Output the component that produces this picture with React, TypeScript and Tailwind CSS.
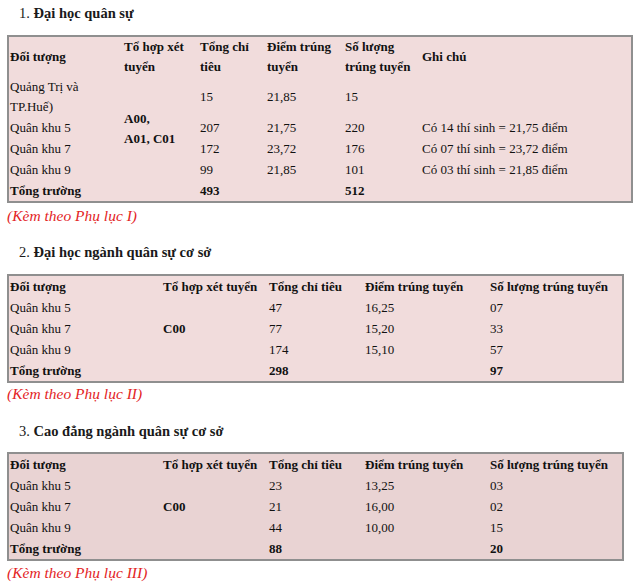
const td = "px-px py-0 h-[21px] leading-[20px] align-middle text-left";

function Title({ n, text }: { n: string; text: string }) {
  return (
    <div className="pl-[12px] text-[14.5px] leading-[20px] text-[#1a1a1a]">
      {n}. <span className="font-bold">{text}</span>
    </div>
  );
}

function Caption({ text }: { text: string }) {
  return <div className="text-[15.5px] leading-[20px] italic text-[#e3241f]">{text}</div>;
}

function SmallTable({
  rows,
  tong,
  soLuong,
  bg,
}: {
  rows: [string, string, string, string][];
  tong: string;
  soLuong: string;
  bg: string;
}) {
  return (
    <table
      className={`w-[617px] table-fixed border-separate border-spacing-0 border-2 border-[#8f8f8f] text-[13px] text-[#111] ${bg}`}
    >
      <colgroup>
        <col className="w-[153px]" />
        <col className="w-[106px]" />
        <col className="w-[96px]" />
        <col className="w-[125px]" />
        <col />
      </colgroup>
      <tbody>
        <tr className="font-bold">
          <td className={td}>Đối tượng</td>
          <td className={td}>Tổ hợp xét tuyển</td>
          <td className={td}>Tổng chỉ tiêu</td>
          <td className={td}>Điểm trúng tuyển</td>
          <td className={td}>Số lượng trúng tuyển</td>
        </tr>
        {rows.map((r, i) => (
          <tr key={r[0]}>
            <td className={td}>{r[0]}</td>
            {i === 0 && (
              <td rowSpan={3} className={`${td} font-bold`}>
                C00
              </td>
            )}
            <td className={td}>{r[1]}</td>
            <td className={td}>{r[2]}</td>
            <td className={td}>{r[3]}</td>
          </tr>
        ))}
        <tr className="font-bold">
          <td className={td}>Tổng trường</td>
          <td className={td}></td>
          <td className={td}>{tong}</td>
          <td className={td}></td>
          <td className={td}>{soLuong}</td>
        </tr>
      </tbody>
    </table>
  );
}

export default function App() {
  return (
    <div className="font-['Liberation_Serif'] w-[640px] h-[586px] bg-white px-[7px] pt-[3px] overflow-hidden">
      <Title n="1" text="Đại học quân sự" />

      <table className="mt-[12px] w-[626px] table-fixed border-separate border-spacing-0 border-2 border-[#8f8f8f] bg-[#f1dcdc] text-[13px] text-[#111]">
        <colgroup>
          <col className="w-[114px]" />
          <col className="w-[76px]" />
          <col className="w-[67px]" />
          <col className="w-[78px]" />
          <col className="w-[77px]" />
          <col />
        </colgroup>
        <tbody>
          <tr className="font-bold">
            <td className={td}>Đối tượng</td>
            <td className={td}>
              Tổ hợp xét
              <br />
              tuyển
            </td>
            <td className={td}>
              Tổng chỉ
              <br />
              tiêu
            </td>
            <td className={td}>
              Điểm trúng
              <br />
              tuyển
            </td>
            <td className={td}>
              Số lượng
              <br />
              trúng tuyển
            </td>
            <td className={td}>Ghi chú</td>
          </tr>
          <tr>
            <td className={td}>
              Quảng Trị và
              <br />
              TP.Huế)
            </td>
            <td rowSpan={4} className={`${td} font-bold`}>
              A00,
              <br />
              A01, C01
            </td>
            <td className={td}>15</td>
            <td className={td}>21,85</td>
            <td className={td}>15</td>
            <td className={td}></td>
          </tr>
          <tr>
            <td className={td}>Quân khu 5</td>
            <td className={td}>207</td>
            <td className={td}>21,75</td>
            <td className={td}>220</td>
            <td className={td}>Có 14 thí sinh = 21,75 điểm</td>
          </tr>
          <tr>
            <td className={td}>Quân khu 7</td>
            <td className={td}>172</td>
            <td className={td}>23,72</td>
            <td className={td}>176</td>
            <td className={td}>Có 07 thí sinh = 23,72 điểm</td>
          </tr>
          <tr>
            <td className={td}>Quân khu 9</td>
            <td className={td}>99</td>
            <td className={td}>21,85</td>
            <td className={td}>101</td>
            <td className={td}>Có 03 thí sinh = 21,85 điểm</td>
          </tr>
          <tr className="font-bold">
            <td className={td}>Tổng trường</td>
            <td className={td}></td>
            <td className={td}>493</td>
            <td className={td}></td>
            <td className={td}>512</td>
            <td className={td}></td>
          </tr>
        </tbody>
      </table>
      <div className="mt-[3px]">
        <Caption text="(Kèm theo Phụ lục I)" />
      </div>

      <div className="mt-[16px]">
        <Title n="2" text="Đại học ngành quân sự cơ sở" />
      </div>
      <div className="mt-[12px]">
        <SmallTable
          bg="bg-[#f1dcdc]"
          rows={[
            ["Quân khu 5", "47", "16,25", "07"],
            ["Quân khu 7", "77", "15,20", "33"],
            ["Quân khu 9", "174", "15,10", "57"],
          ]}
          tong="298"
          soLuong="97"
        />
      </div>
      <div className="mt-px">
        <Caption text="(Kèm theo Phụ lục II)" />
      </div>

      <div className="mt-[17px]">
        <Title n="3" text="Cao đẳng ngành quân sự cơ sở" />
      </div>
      <div className="mt-[11px]">
        <SmallTable
          bg="bg-[#e9d3d3]"
          rows={[
            ["Quân khu 5", "23", "13,25", "03"],
            ["Quân khu 7", "21", "16,00", "02"],
            ["Quân khu 9", "44", "10,00", "15"],
          ]}
          tong="88"
          soLuong="20"
        />
      </div>
      <div className="mt-[2px]">
        <Caption text="(Kèm theo Phụ lục III)" />
      </div>
    </div>
  );
}
